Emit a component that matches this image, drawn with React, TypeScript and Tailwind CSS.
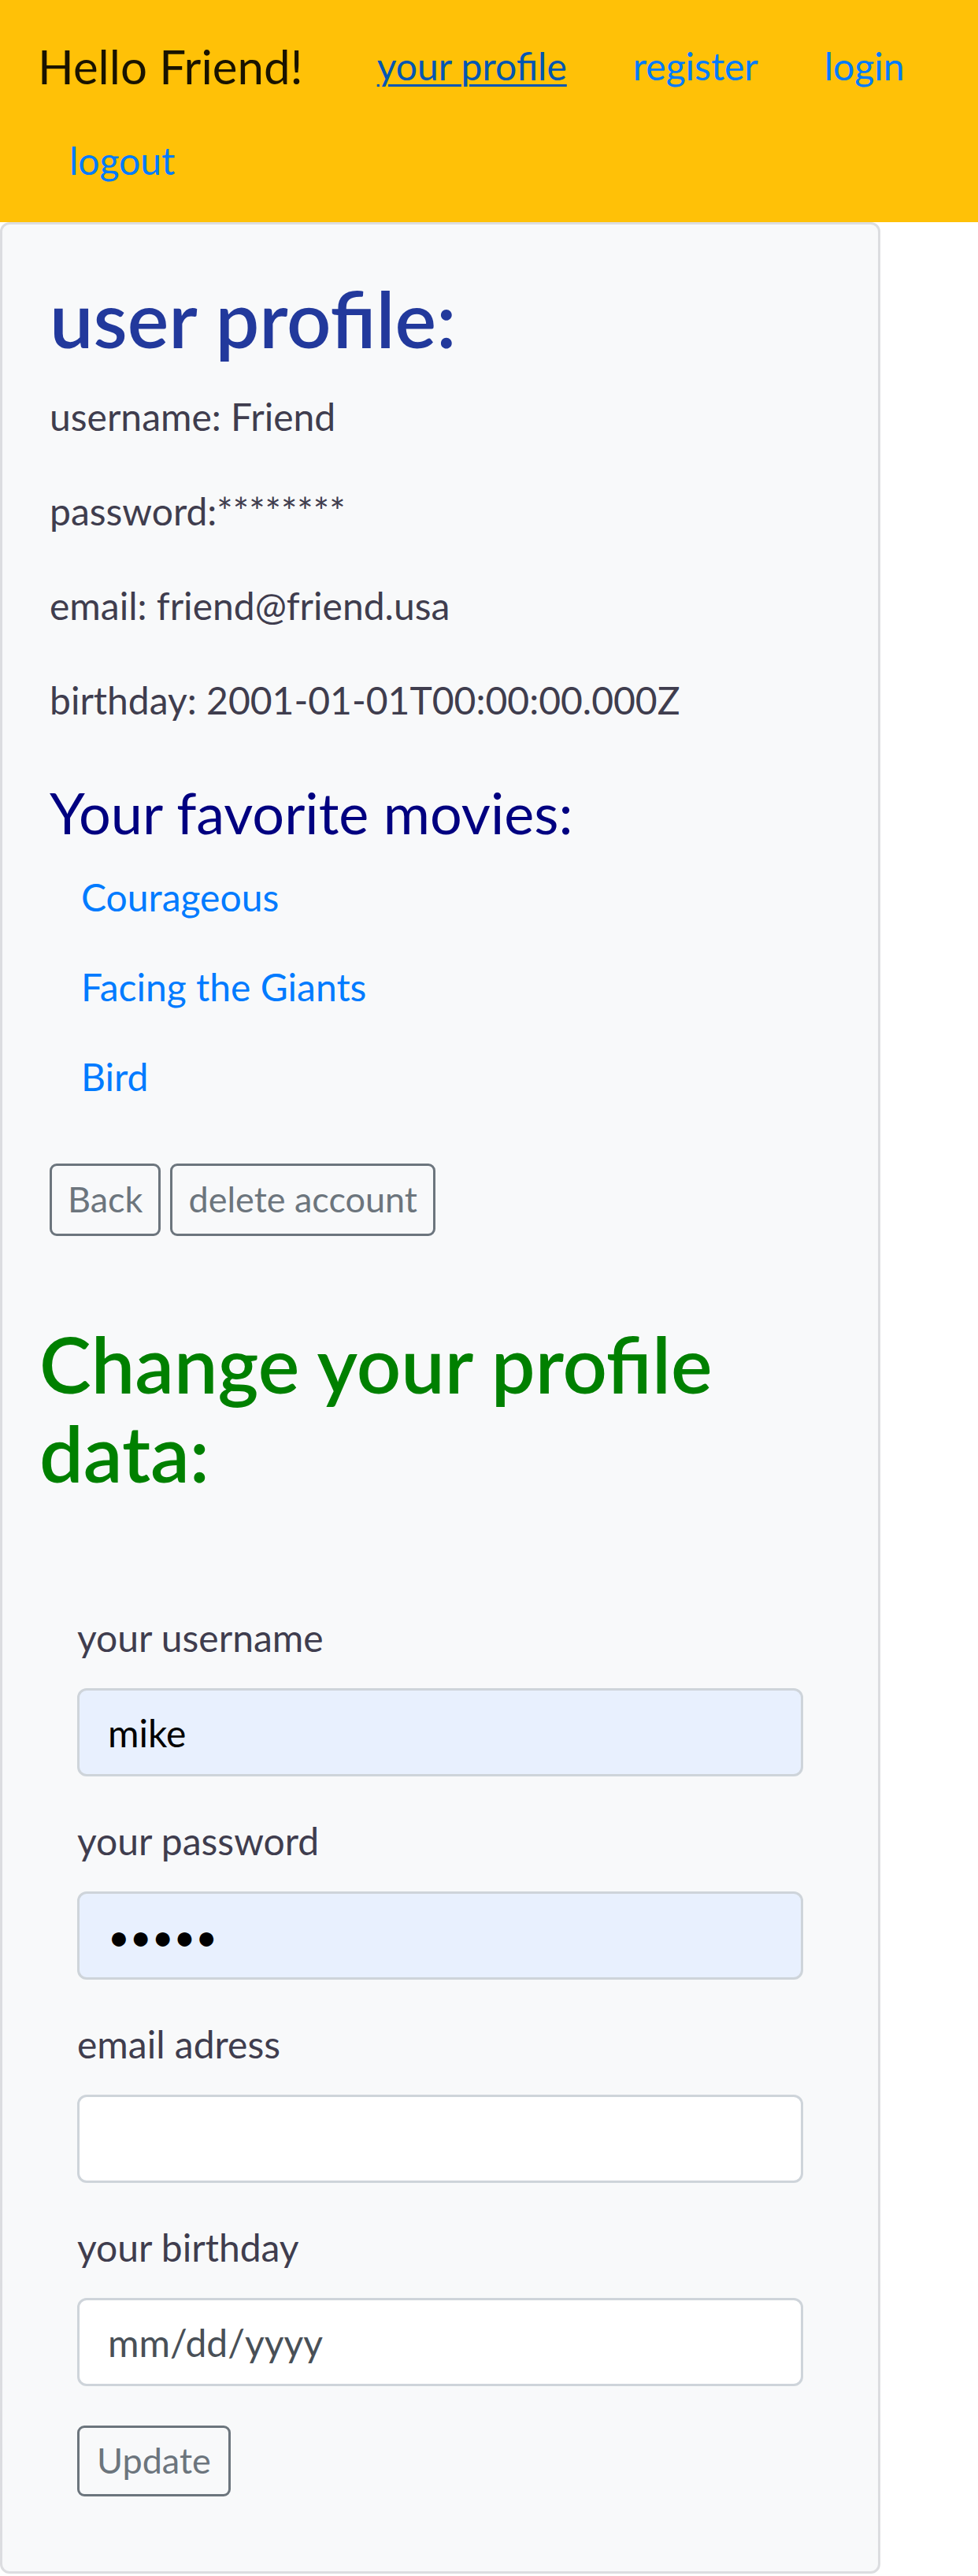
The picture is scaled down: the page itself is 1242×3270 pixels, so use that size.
import React from 'react';

const movies = ['Courageous', 'Facing the Giants', 'Bird'];

const fields = [
    { label: 'your username', type: 'text', value: 'mike', filled: true },
    { label: 'your password', type: 'password', value: 'mike1', filled: true },
    { label: 'email adress', type: 'email', value: '', filled: false },
    { label: 'your birthday', type: 'text', value: '', filled: false, placeholder: 'mm/dd/yyyy' },
];

const ProfileView = () => {
    return (
        <div className="min-h-[3270px] bg-white font-['Lato',sans-serif] text-[48px] leading-[1.5] text-[#3f3d4e]">
            <nav className="bg-[#ffc107] px-[48px] pt-[24px] pb-[18px]">
                <div className="flex h-[120px] items-center">
                    <a className="mr-[52px] text-[60px] text-black/90">Hello Friend!</a>
                    <a className="px-[42px] text-[#0056b3] underline decoration-[3px] underline-offset-[5px]">your profile</a>
                    <a className="px-[42px] text-[#007bff]">register</a>
                    <a className="px-[42px] text-[#007bff]">login</a>
                </div>
                <div className="flex h-[120px] items-center">
                    <a className="px-[40px] text-[#007bff]">logout</a>
                </div>
            </nav>

            <div className="w-[1118px] rounded-[12px] border-[3px] border-[#dcdde0] bg-[#f8f9fa]">
                <div className="px-[60px] pt-[60px]">
                    <h2 className="mb-[29px] text-[99px] font-semibold leading-[1.2] text-[#22399c]">user profile:</h2>
                    <p className="mb-[48px]">username: Friend</p>
                    <p className="mb-[48px]">password:********</p>
                    <p className="mb-[48px]">email: friend@friend.usa</p>
                    <p className="mb-[48px]">birthday: 2001-01-01T00:00:00.000Z</p>

                    <h4 className="mt-[63px] text-[72px] leading-[1.2] text-[#000080]">Your favorite movies:</h4>
                    <ul className="mt-[29px] flex flex-col gap-[42px] pl-[40px]">
                        {movies.map((m) => (
                            <li key={m}>
                                <a className="text-[#007bff]">{m}</a>
                            </li>
                        ))}
                    </ul>

                    <div className="mt-[74px] flex gap-[12px]">
                        <button className="h-[92px] rounded-[9px] border-[3px] border-[#6c757d] px-[20px] text-[45px] text-[#6c757d]">Back</button>
                        <button className="h-[92px] rounded-[9px] border-[3px] border-[#6c757d] px-[20px] text-[45px] text-[#6c757d]">delete account</button>
                    </div>
                </div>

                <div className="mt-[105px] px-[47px] pb-[95px]">
                    <h2 className="text-[99px] font-semibold leading-[113px] text-[#008000]">Change your profile data:</h2>

                    <form className="mt-[143px] px-[48px]">
                        {fields.map((f) => (
                            <div key={f.label} className="mb-[46px]">
                                <label className="mb-[28px] block">{f.label}</label>
                                <input
                                    type={f.type}
                                    defaultValue={f.value}
                                    placeholder={f.placeholder}
                                    className={`h-[112px] w-full rounded-[12px] border-[3px] border-[#ced4da] px-[36px] text-[48px] text-black outline-none placeholder:text-[#495057] ${f.filled ? 'bg-[#e8f0fe]' : 'bg-white'}`}
                                />
                            </div>
                        ))}
                        <button type="button" className="mt-[4px] h-[90px] rounded-[9px] border-[3px] border-[#6c757d] px-[22px] text-[45px] text-[#6c757d]">Update</button>
                    </form>
                </div>
            </div>
        </div>
    );
};

export default ProfileView;
